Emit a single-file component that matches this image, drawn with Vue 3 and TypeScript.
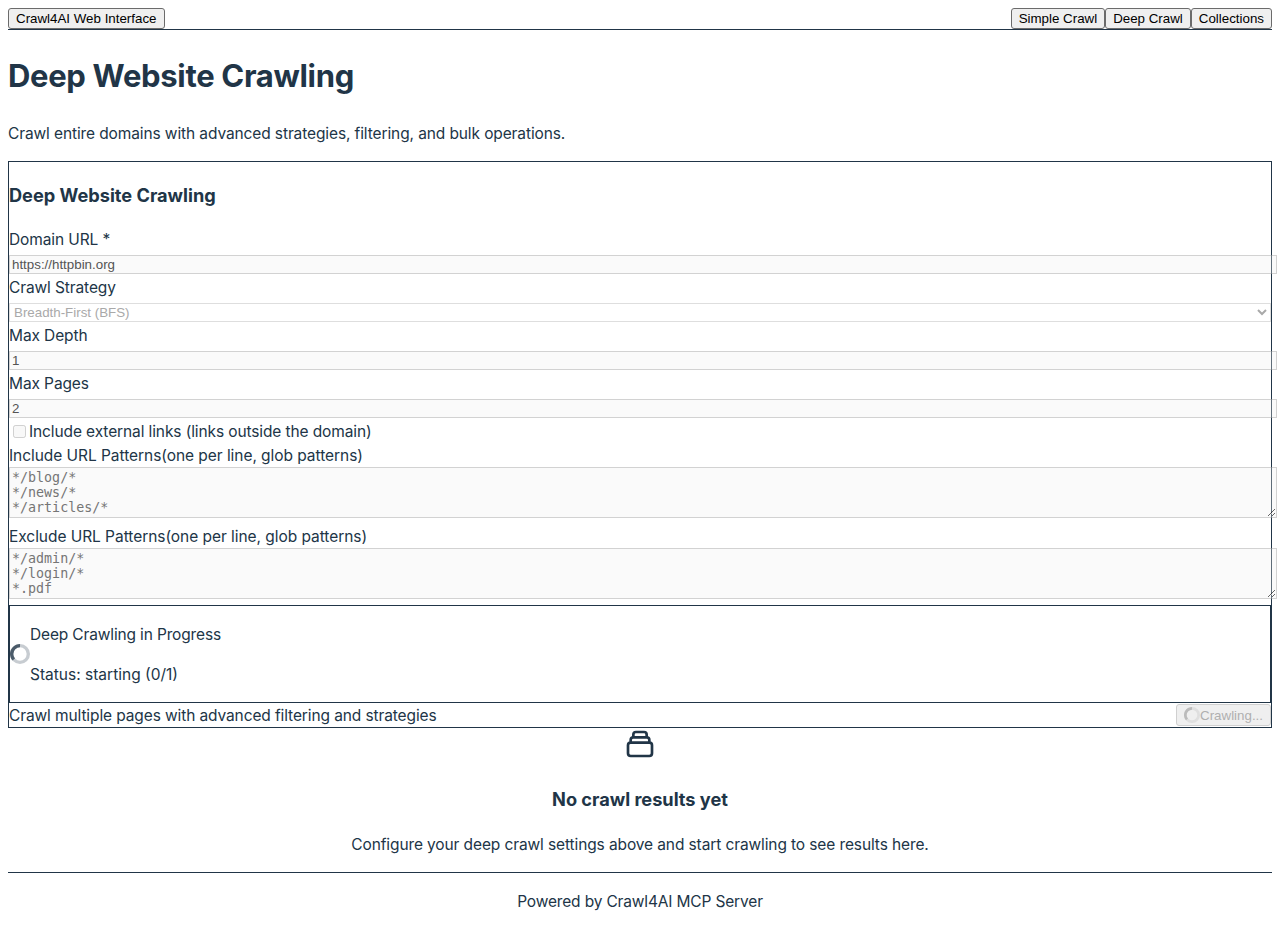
<script setup lang="ts">
import { ref } from 'vue'

const domain = ref('https://httpbin.org')
const strategy = ref('bfs')
const maxDepth = ref(1)
const maxPages = ref(2)
const navItems: string[] = ['Simple Crawl', 'Deep Crawl', 'Collections']
const includeHint = '*/blog/*\n*/news/*\n*/articles/*'
const excludeHint = '*/admin/*\n*/login/*\n*.pdf'
</script>

<template>
  <div class="page">
    <header>
      <button>Crawl4AI Web Interface</button>
      <nav><button v-for="item in navItems" :key="item">{{ item }}</button></nav>
    </header>
    <main>
      <h1>Deep Website Crawling</h1>
      <p>Crawl entire domains with advanced strategies, filtering, and bulk operations.</p>
      <section class="card">
        <h3>Deep Website Crawling</h3>
        <div class="field"><label>Domain URL *</label><input v-model="domain" type="url" disabled /></div>
        <div class="field">
          <label>Crawl Strategy</label>
          <select v-model="strategy" disabled><option value="bfs">Breadth-First (BFS)</option></select>
        </div>
        <div class="field"><label>Max Depth</label><input v-model="maxDepth" type="number" disabled /></div>
        <div class="field"><label>Max Pages</label><input v-model="maxPages" type="number" disabled /></div>
        <label class="check"><input type="checkbox" disabled /><span>Include external links (links outside the domain)</span></label>
        <div class="area"><label>Include URL Patterns<span>(one per line, glob patterns)</span></label><textarea rows="3" :placeholder="includeHint" disabled /></div>
        <div class="area"><label>Exclude URL Patterns<span>(one per line, glob patterns)</span></label><textarea rows="3" :placeholder="excludeHint" disabled /></div>
        <div class="progress">
          <svg class="spinner" width="20" height="20" viewBox="0 0 24 24" fill="none"><circle cx="12" cy="12" r="10" stroke="currentColor" stroke-width="4" opacity=".25" /><path opacity=".75" fill="currentColor" d="M4 12a8 8 0 018-8V0C5.373 0 0 5.373 0 12h4zm2 5.291A7.962 7.962 0 014 12H0c0 3.042 1.135 5.824 3 7.938l3-2.647z" /></svg>
          <div><p>Deep Crawling in Progress</p><p class="status">Status: starting (0/1)</p></div>
        </div>
        <div class="actions">
          <span class="note">Crawl multiple pages with advanced filtering and strategies</span>
          <button disabled><svg class="spinner" width="16" height="16" viewBox="0 0 24 24" fill="none"><circle cx="12" cy="12" r="10" stroke="currentColor" stroke-width="4" opacity=".25" /><path opacity=".75" fill="currentColor" d="M4 12a8 8 0 018-8V0C5.373 0 0 5.373 0 12h4zm2 5.291A7.962 7.962 0 014 12H0c0 3.042 1.135 5.824 3 7.938l3-2.647z" /></svg>Crawling...</button>
        </div>
      </section>
      <section class="empty">
        <svg width="32" height="32" viewBox="0 0 24 24" fill="none" stroke="currentColor" stroke-width="2" stroke-linecap="round" stroke-linejoin="round"><path d="M19 11H5m14 0a2 2 0 012 2v6a2 2 0 01-2 2H5a2 2 0 01-2-2v-6a2 2 0 012-2m14 0V9a2 2 0 00-2-2M5 11V9a2 2 0 012-2m0 0V5a2 2 0 012-2h6a2 2 0 012 2v2M7 7h10" /></svg>
        <h3>No crawl results yet</h3>
        <p>Configure your deep crawl settings above and start crawling to see results here.</p>
      </section>
    </main>
    <footer><p>Powered by Crawl4AI MCP Server</p></footer>
  </div>
</template>

<style>
body { margin: 0; background: #fff; }
</style>
<style scoped>
.page { padding: 8px; font: 15.5px/24px Inter, sans-serif; letter-spacing: -0.11px; color: #213547; }
header { display: flex; justify-content: space-between; border-bottom: 1px solid #213547; }
nav { display: flex; }
button, input, select { font-family: "Liberation Sans", Arial, sans-serif; font-size: 13.3333px; letter-spacing: 0; }
button { height: 21px; border: 1px solid #6b6b6b; border-radius: 3px; padding: 1px 7px; background: #efefef; }
button:disabled { color: #afafaf; border-color: #d0d0d0; }
h1 { font-size: 31px; line-height: 48px; letter-spacing: -0.32px; margin: 22.44px 0 20.44px; }
h3 { font-size: 18.2px; line-height: 28px; letter-spacing: -0.01px; margin: 18.72px 0; }
p { margin: 16px 0; }
p, label, .note { height: 24px; line-height: 26px; }
.card { border: 1px solid #213547; }
.field label, .area label { display: block; }
.field { height: 48px; }
.field input, .field select { display: block; width: 100%; margin-top: 4px; }
.field input, textarea { box-sizing: content-box; border: 1px solid rgba(118, 118, 118, .3); border-radius: 0; background: rgba(239, 239, 239, .3); }
.field input { height: 15px; line-height: 15px; padding: 1px 2px; }
.field select { height: 19px; color: #a9a9a9; background: #fff; border: 1px solid #dedede; border-radius: 0; opacity: 1; }
.check { display: flex; align-items: flex-start; }
.check input { margin: 6px 3px 5px 4px; }
.area { height: 81px; }
.area label { letter-spacing: -0.05px; }
textarea { width: 100%; height: 45px; display: block; padding: 2px; font: 13.3333px/15px "DejaVu Sans Mono", monospace; letter-spacing: 0; }
textarea::placeholder { color: #757575; }
.progress { display: flex; align-items: center; border: 1px solid #213547; height: 96px; }
.progress p { letter-spacing: -0.15px; }
.progress .status { letter-spacing: 0; }
.spinner { flex: none; }
.actions { display: flex; justify-content: space-between; }
.actions button { display: flex; align-items: center; height: 22px; margin-top: 1px; }
.empty { text-align: center; }
.empty svg { display: block; margin: 0 auto; }
.empty h3 { margin: 24.72px 0 18.72px; }
footer { border-top: 1px solid #213547; text-align: center; letter-spacing: -0.16px; }
</style>
